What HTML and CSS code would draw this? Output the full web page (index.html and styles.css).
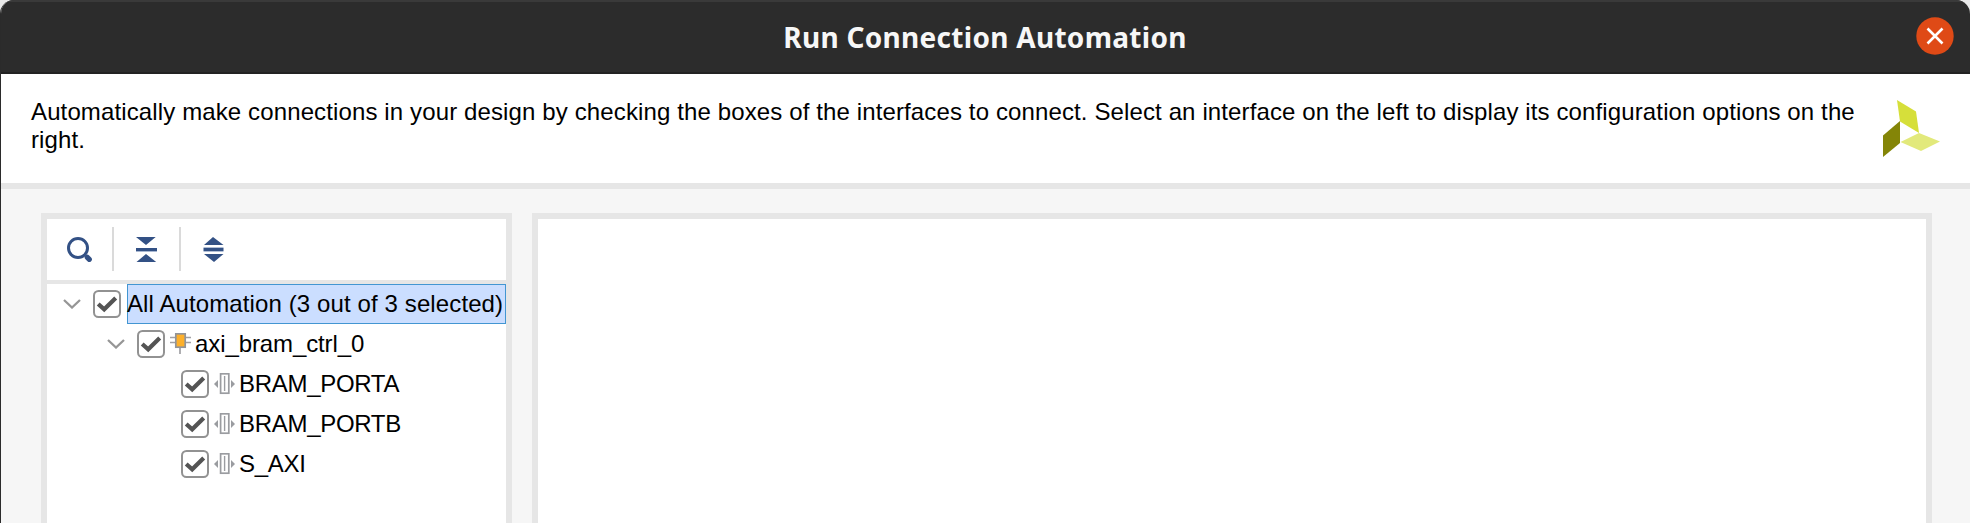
FILE: index.html
```html
<!DOCTYPE html>
<html lang="en">
<head>
<meta charset="utf-8">
<title>Run Connection Automation</title>
<link rel="stylesheet" href="styles.css">
</head>
<body>
<svg width="0" height="0" class="defs">
  <symbol id="chevron" viewBox="0 0 18 10"><path d="M1 1L9 8.5L17 1" fill="none" stroke="#969696" stroke-width="2.3"/></symbol>
  <symbol id="checkbox" viewBox="0 0 28 28"><rect x="1" y="1" width="26" height="26" rx="4.5" fill="#fff" stroke="#929292" stroke-width="2"/><path d="M5.2 14L11.2 19.3L22.7 8" fill="none" stroke="#545454" stroke-width="4.2"/></symbol>
  <symbol id="chip" viewBox="0 0 22 22"><path d="M0 4.5H21M0 9.5H21M10 14V21" stroke="#a0a0a4" stroke-width="1.7" fill="none"/><rect x="5.8" y=".8" width="9.4" height="13.4" fill="#fdb02b" stroke="#929498" stroke-width="1.7"/></symbol>
  <symbol id="port" viewBox="0 0 22 22"><rect x="6.6" y=".8" width="8.2" height="19.4" fill="#fff" stroke="#9a9ca0" stroke-width="1.7"/><path d="M10.6 3V18" stroke="#9a9ca0" stroke-width="1.4"/><path d="M4 7V15L0 11ZM17 7V15L21 11Z" fill="#9a9ca0"/></symbol>
</svg>
<div class="dialog">
  <header class="titlebar">
    <h1 class="title">Run Connection Automation</h1>
    <svg class="close" viewBox="0 0 38 38"><circle cx="19" cy="19" r="18.7" fill="#df4a16"/><path d="M11.5 11.5L26.5 26.5M26.5 11.5L11.5 26.5" stroke="#fff" stroke-width="2.6"/></svg>
  </header>
  <section class="intro">
    <p class="description">Automatically make connections in your design by checking the boxes of the interfaces to connect. Select an interface on the left to display its configuration options on the right.</p>
    <svg class="logo" viewBox="0 0 57 57"><path d="M14 0L33 11.5L36 33L17 21.5Z" fill="#d6df3a"/><path d="M17 21V43L0 57V35.5Z" fill="#848507"/><path d="M17.5 42L36 33L57 41.5L38 51Z" fill="#e2e97b"/></svg>
  </section>
  <main class="content">
    <aside class="panel tree-panel">
      <div class="toolbar">
        <svg class="tool" viewBox="0 0 26 26"><circle cx="11" cy="11" r="9.5" fill="none" stroke="#335185" stroke-width="3"/><path d="M20.3 20.3L22.3 22.3" stroke="#335185" stroke-width="5.2" stroke-linecap="round"/></svg>
        <span class="divider"></span>
        <svg class="tool" viewBox="0 0 26 26"><path d="M3 0H22.7L13 8ZM3.5 25H23.2L13 17Z" fill="#335185"/><path d="M3 14.4H24" stroke="#a9b8d2" stroke-width="1.4"/><path d="M3 12.4H24" stroke="#335185" stroke-width="3"/></svg>
        <span class="divider second"></span>
        <svg class="tool" viewBox="0 0 26 26"><path d="M4 8H23.5L13 0ZM4 17H23.5L14 25Z" fill="#335185"/><path d="M3.5 10.6H23.5M3.5 14.4H23.5" stroke="#a9b8d2" stroke-width="1"/><path d="M3.5 12.5H23.5" stroke="#335185" stroke-width="3"/></svg>
      </div>
      <div class="tree">
        <div class="row">
          <svg class="chevron"><use href="#chevron"/></svg>
          <svg class="checkbox"><use href="#checkbox"/></svg>
          <span class="label selected">All Automation (3 out of 3 selected)</span>
        </div>
        <div class="row level-2">
          <svg class="chevron"><use href="#chevron"/></svg>
          <svg class="checkbox"><use href="#checkbox"/></svg>
          <svg class="icon"><use href="#chip"/></svg>
          <span class="label instance">axi_bram_ctrl_0</span>
        </div>
        <div class="row level-3">
          <svg class="checkbox"><use href="#checkbox"/></svg>
          <svg class="icon"><use href="#port"/></svg>
          <span class="label">BRAM_PORTA</span>
        </div>
        <div class="row level-3">
          <svg class="checkbox"><use href="#checkbox"/></svg>
          <svg class="icon"><use href="#port"/></svg>
          <span class="label">BRAM_PORTB</span>
        </div>
        <div class="row level-3">
          <svg class="checkbox"><use href="#checkbox"/></svg>
          <svg class="icon"><use href="#port"/></svg>
          <span class="label">S_AXI</span>
        </div>
      </div>
    </aside>
    <section class="panel options-panel"></section>
  </main>
</div>
</body>
</html>
```

FILE: styles.css
```css
* { box-sizing: border-box; }
body { margin: 0; background: #e9e9e9; font-family: "Liberation Sans", Arial, sans-serif; font-size: 24px; color: #000; }
svg { display: block; flex: none; }
.defs { position: absolute; }
.dialog { height: 523px; display: flex; flex-direction: column; overflow: hidden; border-left: 1px solid #2b2b2b; border-radius: 14px 14px 0 0; background: #f6f6f6; }
.titlebar { height: 74px; flex: none; display: grid; grid-template-columns: 1fr auto 1fr; align-items: center; background: #2c2c2c; border-top: 2px solid #3a3a3a; border-bottom: 2px solid #222; padding-right: 16px; }
.title { grid-column: 2; margin: 0 -15px 0 0; font: bold 28px/38px "Noto Sans", sans-serif; letter-spacing: .29px; color: #f7f7f7; white-space: nowrap; }
.close { justify-self: end; width: 38px; height: 38px; margin-bottom: 2px; }
.intro { height: 115px; flex: none; display: flex; align-items: flex-start; justify-content: space-between; background: #fff; border-bottom: 6px solid #e6e6e6; padding: 24px 30px 0; }
.description { width: 1835px; margin: 0; line-height: 28px; letter-spacing: .124px; }
.logo { width: 57px; height: 57px; margin-top: 2px; }
.content { flex: 1; display: flex; gap: 20px; padding: 24px 38px 0 40px; }
.panel { background: #fff; border: 6px solid #e6e6e6; border-bottom: 0; }
.tree-panel { width: 471px; flex: none; }
.options-panel { flex: 1; }
.toolbar { height: 65px; display: flex; align-items: center; border-bottom: 4px solid #e6e6e6; padding-left: 20px; }
.tool { width: 26px; height: 26px; margin-top: 1px; }
.divider { width: 2px; height: 44px; margin: 0 19px 1px; background: #dadada; }
.second { margin-left: 20px; }
.row { height: 40px; display: flex; align-items: center; padding-left: 16px; }
.level-2 { padding-left: 60px; }
.level-3 { padding-left: 134px; }
.chevron { width: 18px; height: 10px; margin-right: 12px; }
.checkbox { width: 28px; height: 28px; }
.icon { width: 22px; height: 22px; margin: 0 3px 0 5px; }
.label { line-height: 38px; border: 1px solid transparent; border-left: 0; white-space: nowrap; letter-spacing: -.3px; }
.instance { letter-spacing: -.1px; }
.selected { flex: 1; margin-left: 6px; background: #cbdeff; border: 1px solid #4296d2; text-indent: -1px; letter-spacing: .11px; }
```
